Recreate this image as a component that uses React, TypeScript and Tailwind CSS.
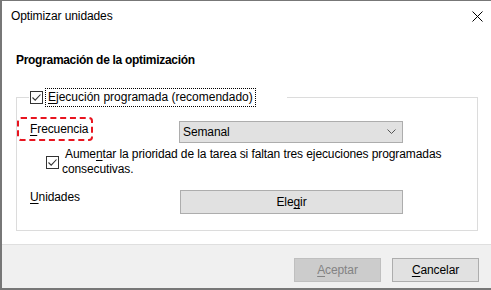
function Check({ className = '' }: { className?: string }) {
  return (
    <span className={`inline-flex w-[13px] h-[13px] border border-[#333333] bg-white items-center justify-center shrink-0 ${className}`}>
      <svg width="11" height="11" viewBox="0 0 11 11" fill="none">
        <path d="M1.5 5.5 L4.2 8.2 L9.5 2.5" stroke="#333333" strokeWidth="1.1" />
      </svg>
    </span>
  )
}

function Chevron() {
  return (
    <svg width="9" height="6" viewBox="0 0 9 6" fill="none">
      <path d="M0.5 0.5 L4.5 4.5 L8.5 0.5" stroke="#555555" strokeWidth="1" />
    </svg>
  )
}

function CloseIcon() {
  return (
    <svg width="11" height="11" viewBox="0 0 11 11" fill="none">
      <path d="M0.5 0.5 L10.5 10.5 M10.5 0.5 L0.5 10.5" stroke="#000000" strokeWidth="1" />
    </svg>
  )
}

export default function App() {
  return (
    <div
      className="w-[491px] h-[290px] bg-white border-t border-l-2 border-b-2 border-[#777777] flex flex-col text-[12px] text-black overflow-hidden tracking-[-0.1px]"
      style={{ fontFamily: '"Segoe UI", "Liberation Sans", Arial, sans-serif' }}
    >
      {/* title bar */}
      <div className="h-[30px] flex items-center justify-between pl-[9px] pr-[8px] shrink-0">
        <span className="leading-[16px]">Optimizar unidades</span>
        <CloseIcon />
      </div>

      <div className="flex-1 pl-[14px]">
        <div className="mt-[21px] h-[16px] leading-[16px] font-bold tracking-[-0.3px]">Programación de la optimización</div>

        <fieldset className="mt-[20px] w-[462px] border border-[#dcdcdc] p-0 m-0 min-w-0">
          <legend className="ml-[12px] w-[258px] h-[19px] flex items-center">
            <Check className="ml-[1px]" />
            <span className="ml-[2px] h-[19px] px-[2px] border border-dotted border-black leading-[17px] tracking-normal">
              <span className="underline underline-offset-2">E</span>jecución programada (recomendado)
            </span>
          </legend>

          <div className="mt-[10px] flex items-start">
            <div className="w-[76px] h-[24px] border-2 border-dashed border-[#e8141f] rounded-[4px] pl-[11px] flex items-center leading-[16px]">
              <span><span className="underline underline-offset-2">F</span>recuencia</span>
            </div>
            <div className="ml-[86px] mt-[4px] w-[224px] h-[22px] bg-[#e1e1e1] border border-[#adadad] flex items-center justify-between pl-[3px] pr-[6px]">
              <span className="leading-[16px]">Semanal</span>
              <Chevron />
            </div>
          </div>

          <div className="mt-[4px] flex items-center">
            <Check className="ml-[29px]" />
            <div className="ml-[3px] w-[385px] leading-[15px] indent-[3px]">
              Aume<span className="underline underline-offset-2">n</span>tar la prioridad de la tarea si faltan tres ejecuciones programadas consecutivas.
            </div>
          </div>

          <div className="mt-[13px] mb-[16px] flex items-start">
            <div className="ml-[13px] w-[150px] leading-[16px] -mt-[1px]">
              <span className="underline underline-offset-2">U</span>nidades
            </div>
            <div className="w-[223px] h-[24px] bg-[#e1e1e1] border border-[#adadad] flex items-center justify-center leading-[16px]">
              <span>Ele<span className="underline underline-offset-2">g</span>ir</span>
            </div>
          </div>
        </fieldset>
      </div>

      {/* footer */}
      <div className="h-[44px] shrink-0 bg-[#f0f0f0] border-t border-[#dfdfdf] flex justify-end items-start pt-[13px] pr-[12px] gap-[11px]">
        <div className="w-[87px] h-[24px] bg-[#cccccc] border border-[#bfbfbf] text-[#838383] flex items-center justify-center leading-[16px]">
          <span><span className="underline underline-offset-2">A</span>ceptar</span>
        </div>
        <div className="w-[87px] h-[24px] bg-[#e1e1e1] border border-[#adadad] flex items-center justify-center leading-[16px]">
          <span><span className="underline underline-offset-2">C</span>ancelar</span>
        </div>
      </div>
    </div>
  )
}
